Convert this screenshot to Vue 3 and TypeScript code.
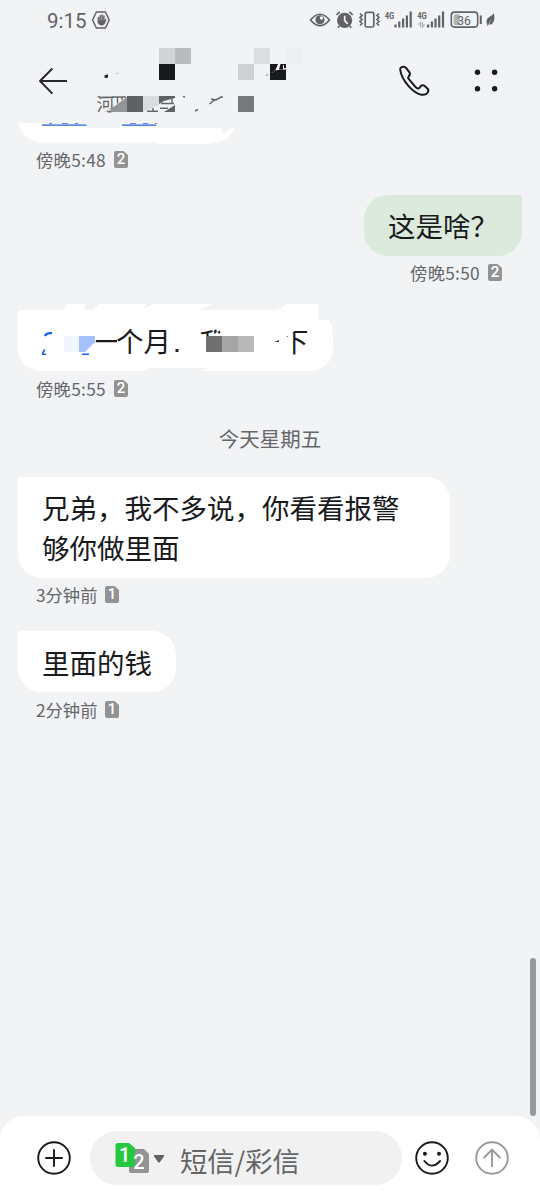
<script setup lang="ts">
interface Message {
  id: number
  kind: 'clipped' | 'redacted' | 'text'
  side: 'in' | 'out'
  lines: string[]
  time: string
  sim: 1 | 2
}

const earlier: Message[] = [
  { id: 1, kind: 'clipped', side: 'in', lines: [], time: '傍晚5:48', sim: 2 },
  { id: 2, kind: 'text', side: 'out', lines: ['这是啥？'], time: '傍晚5:50', sim: 2 },
  { id: 3, kind: 'redacted', side: 'in', lines: [], time: '傍晚5:55', sim: 2 },
]
const today: Message[] = [
  { id: 4, kind: 'text', side: 'in', lines: ['兄弟，我不多说，你看看报警', '够你做里面'], time: '3分钟前', sim: 1 },
  { id: 5, kind: 'text', side: 'in', lines: ['里面的钱'], time: '2分钟前', sim: 1 },
]
const groups = [
  { id: 'earlier', title: '', items: earlier },
  { id: 'today', title: '今天星期五', items: today },
]
</script>

<template>
  <div class="phone">
    <div class="status">
      <span class="clock">9:15</span>
      <svg class="hand" viewBox="91 10 20 20" width="20" height="20">
        <path d="M96.300 12h9.200l3.700 8-3.700 8h-9.200l-3.700-8z" fill="none" stroke="#626365" stroke-width="1.500" stroke-linejoin="round" />
        <path d="M98.400 17.500v5M100.200 15.800v6M102.100 15v7M103.900 16v6" stroke="#626365" stroke-width="1.500" stroke-linecap="round" />
        <path d="M97.700 20.500h6.900l1-1.800 1 .4-1.300 3.900q-1 2.400-3.500 2.400-4.100 0-4.100-4.900z" fill="#626365" />
      </svg>
      <svg class="status-right" viewBox="308 5 192 30" width="192" height="30">
        <path d="M310.500 20q9.500-11.500 19 0-9.500 11.500-19 0z" fill="none" stroke="#626365" stroke-width="1.700" />
        <circle cx="320" cy="19.800" r="4.600" fill="#626365" />
        <circle cx="321.500" cy="18" r="1.700" fill="#f1f3f5" />
        <circle cx="344.600" cy="20.300" r="7.600" fill="#626365" />
        <path d="M336.600 15.200q1-2.200 3.400-3.200M352.600 15.200q-1-2.200-3.400-3.200M339.400 26l-1.500 1.700M349.800 26l1.500 1.700" fill="none" stroke="#626365" stroke-width="1.600" />
        <path d="M344.700 15.800v4.800l3 3.200" fill="none" stroke="#f1f3f5" stroke-width="1.700" />
        <rect x="365.200" y="12.400" width="8.600" height="14.600" rx="1.600" fill="none" stroke="#626365" stroke-width="1.700" />
        <path d="M360 13.500l2 2-2 2 2 2-2 2 2 2-2 2M379 13.500l-2 2 2 2-2 2 2 2-2 2 2 2" fill="none" stroke="#626365" stroke-width="1.700" />
        <g class="net" fill="#626365">
          <text x="384.700" y="18.600" textLength="9.600" lengthAdjust="spacingAndGlyphs">4G</text>
          <text x="417.200" y="18.600" textLength="9.600" lengthAdjust="spacingAndGlyphs">4G</text>
        </g>
        <path d="M395.500 27.400v-3M399.300 27.400v-5.800M403.100 27.400v-9M406.900 27.400v-12M410.700 27.400v-16M428.100 27.400v-3M431.900 27.400v-5.800M435.500 27.400v-9M439.200 27.400v-12M443 27.400v-16" stroke="#626365" stroke-width="2.200" />
        <path d="M418.500 24.500l2-2v5M424.500 24.500l-2 2.500v-5" fill="none" stroke="#b5b6b8" stroke-width="1.300" />
        <rect x="451.300" y="12.100" width="26.400" height="15" rx="3.300" fill="none" stroke="#626365" stroke-width="1.600" />
        <path d="M456 14.300h3.500v10.600H456q-2.400 0-2.400-2.400v-5.800q0-2.400 2.400-2.400z" fill="#b0b1b3" />
        <text class="battery" x="457.300" y="24.500" textLength="13.600" lengthAdjust="spacingAndGlyphs">36</text>
        <path d="M480.800 15.500v8.500" stroke="#626365" stroke-width="2" />
        <path d="M487.500 25.300q-2.900-5.600 2.200-8.500 3.200-1.800 4.200-3.500 1.500 7.500-1.800 10.400-1.400 1.300-2.800.6l2.200-5.600-4 7.800z" fill="#626365" />
      </svg>
    </div>

    <header class="header">
      <svg class="back" viewBox="36 64 34 34" width="34" height="34">
        <path d="M67 81H40.500M52.400 68.500L40 81l12.400 12.700" fill="none" stroke="#26272a" stroke-width="1.900" stroke-linejoin="round" />
      </svg>
      <svg class="contact" viewBox="90 40 220 83" width="220" height="83">
        <path d="M104.500 75.500l3.500-1.200v3l-1.500 1-2-.8z" fill="#202124" />
        <path d="M116 74l3-1.200-1.500 1.200z" fill="#77787a" />
        <path d="M159 48h16v16h-16z" fill="#d2d3d5" />
        <path d="M175 48h16v16h-16z" fill="#babbbd" />
        <path d="M159 64h16v16h-16z" fill="#18191a" />
        <path d="M238 64h16v16h-16z" fill="#cfd0d2" />
        <path d="M254 48h16v16h-16z" fill="#dcdddf" />
        <path d="M286 48h16v16h-16z" fill="#edeef0" />
        <path d="M270 64h16v16h-16z" fill="#18191a" />
        <path d="M270 73l5-2 3-7h2.500l-1.500 5.500h4v-4.500h1v3l2 .2v1.300l-11 .8-2 2-3 .4z" fill="#f1f3f5" />
        <path d="M265.500 76l3-3-1 2.500z" fill="#77787a" />
        <path d="M96 96h17l-4 3h-10z" fill="#cfd0d2" />
        <path d="M104 112l10-7v7z" fill="#d1d2d4" />
        <text class="region" x="96.500" y="111">河</text>
        <path d="M117.500 96.500v7M112 97h14M122 97v3" stroke="#66676a" stroke-width="1.400" />
        <path d="M111 112v-3l16-12v15z" fill="#949597" />
        <path d="M127 96h16v16h-16z" fill="#606164" />
        <path d="M143 96h16v9l-16 7z" fill="#dadbdd" />
        <path d="M147 111.300h11M153 108v3" fill="none" stroke="#66676a" stroke-width="1.400" />
        <path d="M159 96h16v2l-11 3-5 3zM164 112l11-7v7z" fill="#606164" />
        <path d="M161 103.500h13M160 108.300h8M172 98v5" fill="none" stroke="#66676a" stroke-width="1.400" />
        <path d="M183 96.500l2 .5M195 111l3-1.500M209.500 104l5-4 2-.5M211 99l5 1 5-3h2" fill="none" stroke="#646568" stroke-width="1.500" />
        <path d="M238 96h16v16h-16z" fill="#77787a" />
      </svg>
      <svg class="call" viewBox="397 64 34 34" width="34" height="34">
        <path d="M400.300 70.200q-.7-2.900 2.800-3.500 2-.3 3 1.200l3.500 4.700q1 2-.8 3.500-1.200 1.400.1 3.100l6.900 8.100q1.800 1.800 3.400.8l2-2.400q1.500-1 3.200 0l3.300 3q1.400 1.800-.2 4.100-2.200 2.600-6 1.900c-7.500-1.200-19.800-13.700-21.200-24.500z" fill="none" stroke="#191a1c" stroke-width="2" stroke-linejoin="round" />
      </svg>
      <svg class="more" viewBox="472 67 28 28" width="28" height="28" fill="#191a1c">
        <circle cx="477.500" cy="72.300" r="2.700" /><circle cx="494.600" cy="72.300" r="2.700" />
        <circle cx="477.500" cy="88.800" r="2.700" /><circle cx="494.600" cy="88.800" r="2.700" />
      </svg>
    </header>

    <main class="thread">
      <section v-for="group in groups" :key="group.id" class="group">
        <h2 v-if="group.title" class="day">{{ group.title }}</h2>
        <article v-for="message in group.items" :key="message.id" class="message" :class="message.side">
          <svg v-if="message.kind === 'clipped'" class="clipped" viewBox="18 123 220 21" width="220" height="21">
            <path d="M18.500 123H42v1h44v-1h1v5h32l4-3.500v3h33l1 .5h65v6l12.500-7q-4 14-20 15.500h-3l-3 1.500H157l2-1.500H41Q22 140 18.500 123z" fill="#fff" />
            <path d="M42 125.200h44.500M122 125.200h34" stroke="#225fe0" stroke-width="1.300" />
            <path d="M49 123.500h3M62 123.500h6M75 123.500h3M130 123.500h6M143 123.500h5M155 123.500h2" stroke="#668bdc" />
          </svg>
          <svg v-else-if="message.kind === 'redacted'" class="redacted" viewBox="18 303 315 69" width="315" height="69">
            <defs>
              <clipPath id="clip-one"><path d="M97 330h20v30H94z" /></clipPath>
              <clipPath id="clip-me"><path d="M198 328h22v4.500h-8l-5 5.500h-7z" /></clipPath>
              <clipPath id="clip-down"><path d="M291 334l6-5h13v26h-19z" /></clipPath>
            </defs>
            <path d="M20 310h43l3-6h20l-2 6h9l6-6h48l-6 5 14-5h58l-14 6h78l10-6h31v16h11q4 6 4 14v13c0 15-10 24-24 24H203l6-3h-60l-5 3H42c-14 0-24-9-24-24v-35q0-2 2-2z" fill="#fff" />
            <path d="M44.800 336q2-3.500 7.200-2.800" fill="none" stroke="#175ff0" stroke-width="2.200" />
            <path d="M42.300 353.500l2.500-4M42 354.200h4M82 354.200h7" fill="none" stroke="#175ff0" stroke-width="1.500" />
            <path d="M64 336h15v16H64z" fill="#f0f5ff" />
            <path d="M79 336h16v6l-10 10h-6z" fill="#a4c1fc" />
            <text class="body" x="91" y="352" clip-path="url(#clip-one)">一</text>
            <text class="body" x="116" y="352">个月</text>
            <path d="M175.500 349h3v3h-3z" fill="#202124" />
            <text class="body" x="199" y="352.500" clip-path="url(#clip-me)">我</text>
            <path d="M215 330.500v3M218 332l2 1" stroke="#202124" stroke-width="1.600" />
            <path d="M206 336h16v16h-16z" fill="#707070" />
            <path d="M222 336h16v16h-16z" fill="#a5a5a5" />
            <path d="M238 336h16v16h-16z" fill="#b9b9b9" />
            <path d="M274 342l5-2v2zM286 337l2-1v1z" fill="#444" />
            <text class="body" x="281" y="352" clip-path="url(#clip-down)">下</text>
          </svg>
          <div v-else class="bubble" :class="{ wide: message.lines.length > 1 }">
            <p v-for="line in message.lines" :key="line">{{ line }}</p>
          </div>
          <div class="meta">
            <span :class="{ clocked: message.time.includes(':') }">{{ message.time }}</span>
            <svg class="sim" viewBox="0 0 14 17" width="14" height="17">
              <path d="M2 0h7.500L14 4v11q0 2-2 2H2q-2 0-2-2V2Q0 0 2 0z" fill="#929395" />
              <text x="7" y="13.400" text-anchor="middle">{{ message.sim }}</text>
            </svg>
          </div>
        </article>
      </section>
      <div class="scrollbar"></div>
    </main>

    <footer class="composer">
      <svg class="round" viewBox="0 0 36 36" width="36" height="36" fill="none" stroke="#191a1c" stroke-width="1.900">
        <circle cx="18" cy="18" r="15.800" /><path d="M9.300 18h17.400M18 9.300v17.400" />
      </svg>
      <div class="field">
        <svg class="sim-switch" viewBox="115 1140 52 36" width="52" height="36">
          <path d="M131 1149h13l5 5v17q0 2-2 2h-16q-2 0-2-2v-20q0-2 2-2z" fill="#929395" />
          <path d="M118 1143h11l6 5v16q0 3-3 3h-14q-2.500 0-2.500-2.500v-19q0-2.500 2.500-2.500z" fill="#27c83f" />
          <text x="124.700" y="1162.200" text-anchor="middle">1</text>
          <text x="139" y="1169" text-anchor="middle">2</text>
          <path d="M154.500 1155h9q1.200.2.500 1.200l-4.200 6q-.8.900-1.600 0l-4.200-6q-.5-1 .5-1.200z" fill="#626365" />
        </svg>
        <span class="placeholder">短信/彩信</span>
      </div>
      <svg class="round smile" viewBox="0 0 36 36" width="36" height="36" fill="none" stroke="#191a1c" stroke-width="1.900">
        <circle cx="18" cy="18" r="15.800" /><path d="M10.300 21q7.700 9.200 15.800 0" stroke-linecap="round" />
        <circle cx="10.900" cy="13.800" r="2" fill="#191a1c" stroke="none" /><circle cx="25" cy="13.800" r="2" fill="#191a1c" stroke="none" />
      </svg>
      <svg class="round send" viewBox="0 0 36 36" width="36" height="36" fill="none" stroke="#98999a" stroke-width="1.900">
        <circle cx="18" cy="18" r="15.800" /><path d="M18 27V10M9.700 18l8.300-8.300 8.300 8.300" />
      </svg>
    </footer>
  </div>
</template>

<style>
body {
  background: #f1f3f5;
}
</style>

<style scoped>
.phone {
  display: flex;
  flex-direction: column;
  width: 540px;
  height: 1200px;
  overflow: hidden;
  background: #f1f3f5;
  color: #191a1c;
  font-family: "Noto Sans CJK SC", sans-serif;
}
svg {
  display: block;
  flex: none;
}
.status {
  display: flex;
  align-items: center;
  height: 40px;
  padding-left: 47px;
}
.clock {
  width: 44px;
  padding-top: 1px;
  font: 20.500px/24px Roboto, sans-serif;
  color: #626365;
}
.status-right {
  margin-left: 197px;
}
.net {
  font: 700 9.500px Roboto, sans-serif;
}
.battery {
  font: 13.500px Roboto, sans-serif;
  fill: #626365;
}
.header {
  display: flex;
  align-items: flex-start;
  height: 83px;
  padding-left: 36px;
}
.back,
.call {
  margin-top: 24px;
}
.more {
  margin-top: 27px;
}
.contact {
  margin-left: 20px;
}
.call {
  margin-left: 87px;
}
.more {
  margin-left: 41px;
}
.region {
  font-size: 18px;
  fill: #66676a;
}
.thread {
  position: relative;
  flex: 1;
  padding: 0 18px;
}
.message {
  display: flex;
  flex-direction: column;
  align-items: flex-start;
  margin-bottom: 17.500px;
}
.message.out {
  align-items: flex-end;
}
.clipped + .meta {
  height: 33px;
}
.redacted {
  margin-top: -6.500px;
}
.bubble {
  padding: 10.500px 24px;
  border-radius: 2px 24px 24px 24px;
  background: #fff;
  font-size: 27.500px;
  line-height: 40px;
}
.out .bubble {
  border-radius: 24px 2px 24px 24px;
  background: #dceade;
}
.wide {
  width: 384px;
}
.bubble p {
  margin: 0;
  white-space: nowrap;
}
.body {
  font-size: 27.500px;
  fill: #191a1c;
}
.meta {
  display: flex;
  align-items: center;
  gap: 8px;
  height: 36px;
  padding: 0 18px;
  color: #66676a;
  font-size: 17.300px;
  line-height: 34px;
}
.out .meta {
  padding-right: 20px;
}
.meta span {
  margin-top: -1px;
  white-space: nowrap;
}
.meta .clocked {
  letter-spacing: 0.300px;
}
.sim {
  margin-top: -2px;
}
.sim text {
  font: 500 15px Roboto, sans-serif;
  fill: #fff;
}
.day {
  height: 51.500px;
  margin: 0;
  color: #66676a;
  font-size: 20.500px;
  font-weight: 400;
  line-height: 27px;
  text-align: center;
}
.scrollbar {
  position: absolute;
  right: 4px;
  bottom: 0;
  width: 6px;
  height: 158px;
  border-radius: 3px;
  background: #97989a;
}
.composer {
  display: flex;
  align-items: center;
  height: 84px;
  box-sizing: border-box;
  padding-left: 36px;
  border-radius: 24px 24px 0 0;
  background: #fff;
}
.field {
  display: flex;
  align-items: center;
  width: 312px;
  height: 54px;
  box-sizing: border-box;
  margin: 0 12px 0 18px;
  padding-left: 25px;
  border-radius: 27px;
  background: #f1f1f1;
}
.sim-switch text {
  font: 500 20px Roboto, sans-serif;
  fill: #fff;
}
.placeholder {
  margin: 3px 0 0 13px;
  color: #646567;
  font-size: 27.300px;
  line-height: 40px;
}
.send {
  margin-left: 24px;
}
</style>
